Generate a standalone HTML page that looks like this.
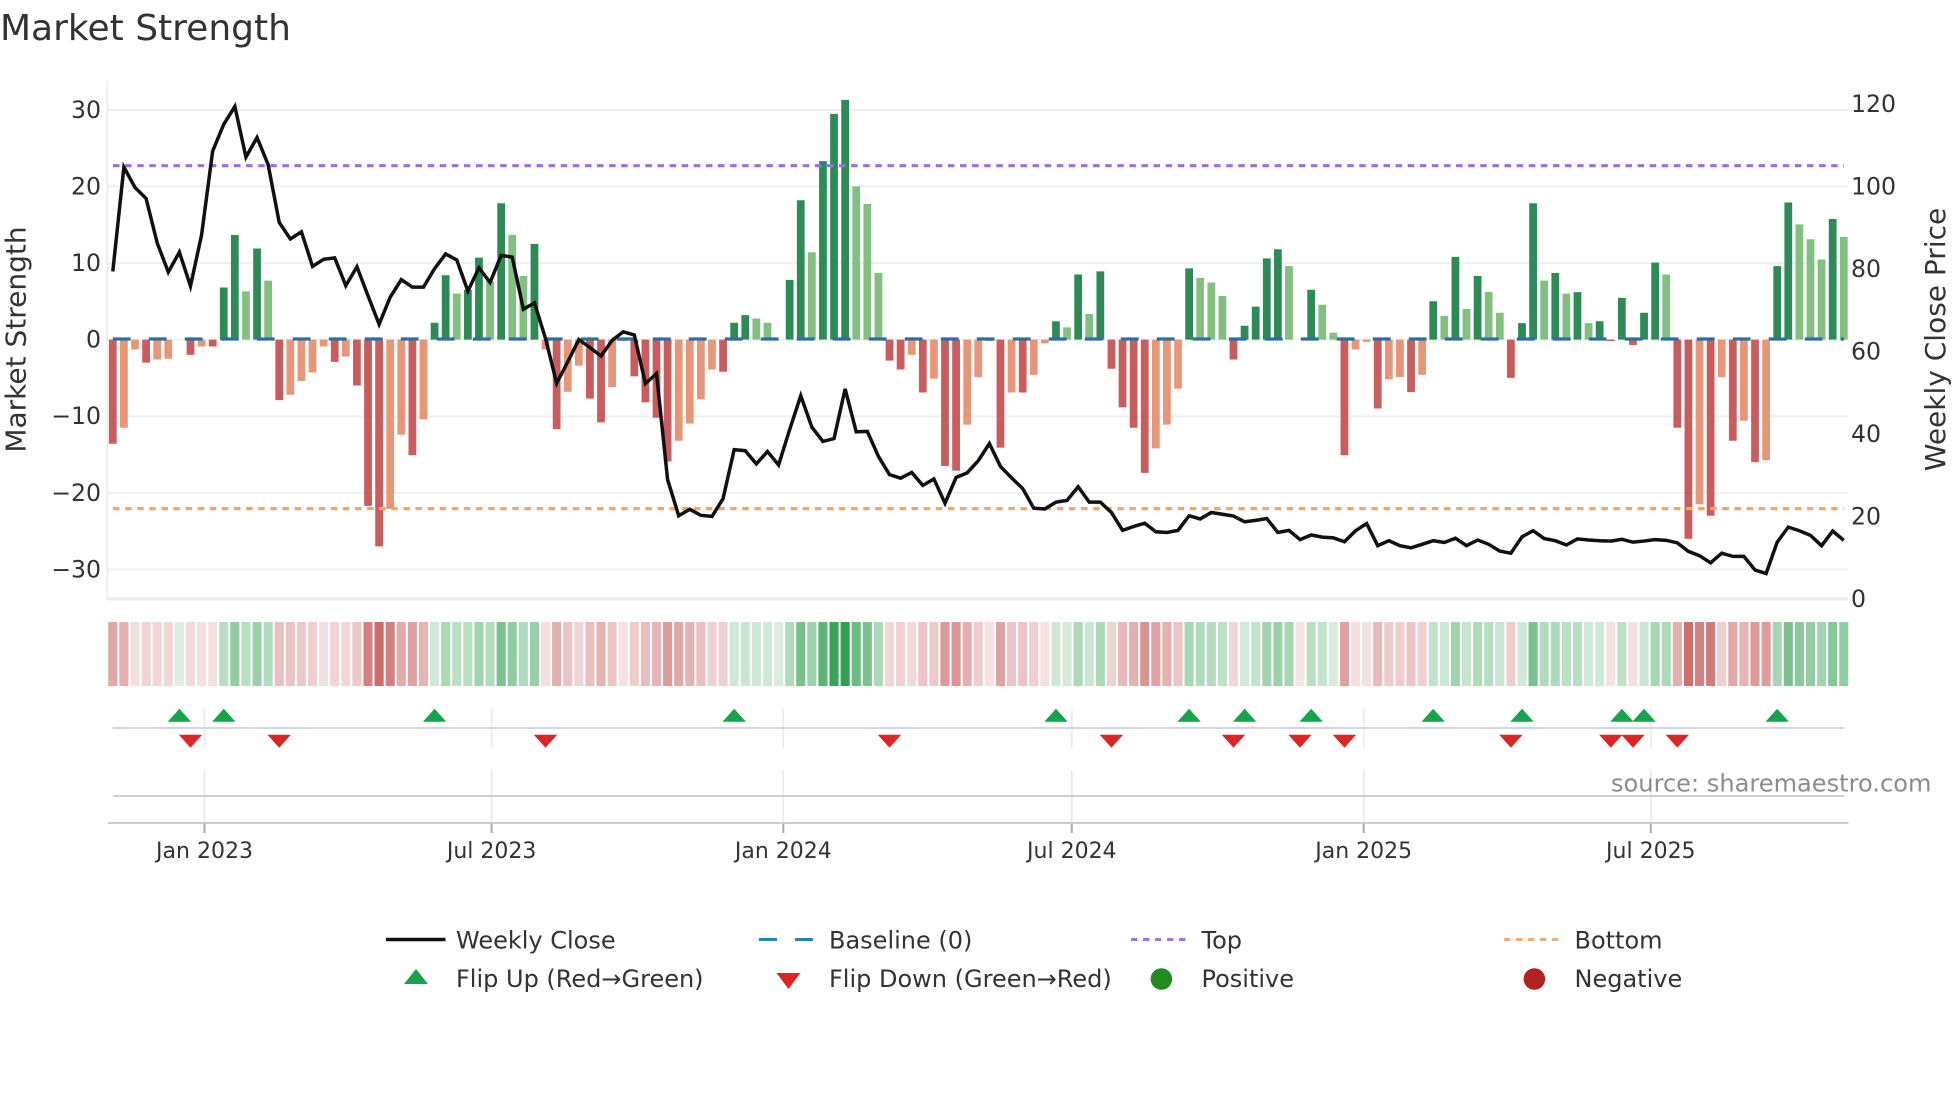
<!DOCTYPE html>
<html><head><meta charset="utf-8"><title>Market Strength</title>
<style>
html,body{margin:0;padding:0;background:#fff;width:1960px;height:1102px;overflow:hidden}
svg{display:block}
text{font-family:"DejaVu Sans","Liberation Sans",sans-serif;fill:#333}
.t{font-size:23.6px}
.x{font-size:22px}
.l{font-size:24px}
</style></head><body>
<svg width="1960" height="1102" viewBox="0 0 1960 1102" xmlns="http://www.w3.org/2000/svg">
<text x="0" y="40" style="font-size:36px">Market Strength</text>
<!-- grid -->
<path stroke="#eef0f2" stroke-width="2" fill="none" d="M108 110H1848M108 186.4H1848M108 263H1848M108 339.6H1848M108 416.2H1848M108 492.8H1848M108 569.5H1848"/>
<path stroke="#eceef2" stroke-width="2" d="M107.3 81V600"/>
<path stroke="#e9ebf2" stroke-width="3" d="M107 599H1848"/>
<!-- bars -->
<g transform="translate(112.8,339.6) scale(11.096,-7.66)" fill="none" stroke-width=".7">
<path stroke="#c95c5c" d="M0 0V-13.6M3 0V-3M7 0V-2M9 0V-.9M15 0V-7.9M20 0V-2.9M22 0V-6M23 0V-21.7M24 0V-27M27 0V-15.1M40 0V-11.7M43 0V-7.7M44 0V-10.8M47 0V-4.8M48 0V-8.2M49 0V-10.2M50 0V-15.9M55 0V-4.2M70 0V-2.75M71 0V-3.9M73 0V-6.9M75 0V-16.5M76 0V-17.1M80 0V-14.1M82 0V-6.9M90 0V-3.8M91 0V-8.85M92 0V-11.5M93 0V-17.4M101 0V-2.6M111 0V-15.1M114 0V-9M117 0V-6.85M126 0V-5M135 0V-.2M137 0V-.7M141 0V-11.5M142 0V-26M144 0V-23M146 0V-13.2M148 0V-16"/>
<path stroke="#e8967a" d="M1 0V-11.5M2 0V-1.3M4 0V-2.6M5 0V-2.5M8 0V-.9M16 0V-7.2M17 0V-5.4M18 0V-4.3M19 0V-.9M21 0V-2.2M25 0V-22.1M26 0V-12.4M28 0V-10.4M39 0V-1.3M41 0V-6.8M42 0V-3.4M45 0V-6.2M46 0V-.2M51 0V-13.2M52 0V-10.95M53 0V-7.8M54 0V-3.9M72 0V-2M74 0V-5.1M77 0V-11.1M78 0V-4.9M79 0V-.2M81 0V-6.9M83 0V-4.6M84 0V-.5M94 0V-14.2M95 0V-11.1M96 0V-6.4M112 0V-1.3M113 0V-.3M115 0V-5.2M116 0V-4.9M118 0V-4.6M143 0V-21.5M145 0V-4.9M147 0V-10.6M149 0V-15.75"/>
<path stroke="#2e8b57" d="M10 0V6.8M11 0V13.65M13 0V11.9M29 0V2.2M30 0V8.4M32 0V6.5M33 0V10.7M35 0V17.8M38 0V12.5M56 0V2.2M57 0V3.2M61 0V7.8M62 0V18.2M64 0V23.3M65 0V29.45M66 0V31.3M85 0V2.4M87 0V8.5M89 0V8.9M97 0V9.3M102 0V1.8M103 0V4.3M104 0V10.6M105 0V11.8M108 0V6.5M119 0V5M121 0V10.8M123 0V8.3M127 0V2.15M128 0V17.8M130 0V8.7M132 0V6.2M134 0V2.4M136 0V5.45M138 0V3.5M139 0V10.05M150 0V9.6M151 0V17.9M155 0V15.75"/>
<path stroke="#82bf80" d="M12 0V6.3M14 0V7.7M31 0V6M34 0V7.6M36 0V13.65M37 0V8.3M58 0V2.75M59 0V2.2M63 0V11.4M67 0V20M68 0V17.7M69 0V8.7M86 0V1.6M88 0V3.35M98 0V8.05M99 0V7.45M100 0V5.7M106 0V9.6M109 0V4.55M110 0V.9M120 0V3.1M122 0V4M124 0V6.2M125 0V3.5M129 0V7.7M131 0V6M133 0V2.15M140 0V8.5M152 0V15.05M153 0V13.1M154 0V10.45M156 0V13.4"/>
</g>
<!-- reference lines -->
<path stroke="#2b70a3" stroke-width="3.2" stroke-dasharray="17.8 18.2" d="M112.8 339H1844" fill="none"/>
<path stroke="#a06ce0" stroke-width="3.2" stroke-dasharray="6.5 5.6" d="M113 165.7H1844" fill="none"/>
<path stroke="#f0a868" stroke-width="3.2" stroke-dasharray="6.5 5.6" d="M113 508.6H1844" fill="none"/>
<!-- close line -->
<polyline transform="translate(112.8,60) scale(11.096,.35714)" fill="none" stroke="#111" stroke-width="3.5" stroke-linejoin="miter" vector-effect="non-scaling-stroke" style="vector-effect:non-scaling-stroke" points="0,592 1,300 2,357 3,388 4,512 5,594 6,538 7,633 8,490 9,255 10,180 11,130 12,272 13,217 14,293 15,455 16,501 17,481 18,578 19,558 20,554 21,632 22,579 23,660 24,740 25,664 26,615 27,636 28,636 29,584 30,543 31,560 32,647 33,582 34,623 35,547 36,552 37,698 38,680 39,780 40,905 41,845 42,783 43,805 44,829 45,785 46,761 47,770 48,906 49,878 50,1175 51,1276 52,1258 53,1275 54,1278 55,1228 56,1091 57,1094 58,1131 59,1096 60,1134 61,1035 62,940 63,1028 64,1068 65,1060 66,921 67,1041 68,1040 69,1110 70,1161 71,1171 72,1155 73,1191 74,1173 75,1241 76,1169 77,1156 78,1122 79,1074 80,1138 81,1170 82,1200 83,1255 84,1257 85,1238 86,1233 87,1195 88,1238 89,1238 90,1267 91,1317 92,1306 93,1297 94,1321 95,1323 96,1317 97,1276 98,1285 99,1267 100,1272 101,1277 102,1293 103,1289 104,1284 105,1323 106,1317 107,1343 108,1330 109,1336 110,1338 111,1349 112,1318 113,1298 114,1360 115,1346 116,1360 117,1366 118,1356 119,1346 120,1351 121,1339 122,1360 123,1344 124,1356 125,1375 126,1381 127,1335 128,1318 129,1340 130,1346 131,1358 132,1341 133,1344 134,1346 135,1347 136,1342 137,1350 138,1347 139,1343 140,1345 141,1352 142,1376 143,1388 144,1408 145,1381 146,1390 147,1390 148,1428 149,1438 150,1350 151,1308 152,1318 153,1331 154,1360 155,1319 156,1345"/>
<!-- axis tick labels -->
<g class="t" text-anchor="end">
<text x="101" y="118">30</text><text x="101" y="194.5">20</text><text x="101" y="271">10</text><text x="101" y="347.6">0</text><text x="101" y="424.2">−10</text><text x="101" y="500.8">−20</text><text x="101" y="577.5">−30</text>
</g>
<g class="t">
<text x="1851" y="112.2">120</text><text x="1851" y="194.7">100</text><text x="1851" y="277.2">80</text><text x="1851" y="359.6">60</text><text x="1851" y="442">40</text><text x="1851" y="524.5">20</text><text x="1851" y="606.8">0</text>
</g>
<text transform="translate(25.5,339.5) rotate(-90)" text-anchor="middle" style="font-size:28px">Market Strength</text>
<text transform="translate(1945,339.5) rotate(-90)" text-anchor="middle" style="font-size:28px">Weekly Close Price</text>
<!-- heat strip -->
<g transform="translate(112.8,622) scale(11.096,64)" fill="none" stroke-width=".82" stroke="rgb(199,88,88)">
<path d="M0 0V1" opacity=".53"/><path d="M1 0V1" opacity=".48"/><path d="M2 0V1" opacity=".2"/><path d="M3 0V1" opacity=".25"/><path d="M4 0V1" opacity=".24"/><path d="M5 0V1" opacity=".24"/><path d="M7 0V1" opacity=".22"/><path d="M8 0V1" opacity=".19"/><path d="M9 0V1" opacity=".19"/><path d="M15 0V1" opacity=".38"/><path d="M16 0V1" opacity=".36"/><path d="M17 0V1" opacity=".31"/><path d="M18 0V1" opacity=".29"/><path d="M19 0V1" opacity=".19"/><path d="M20 0V1" opacity=".25"/><path d="M21 0V1" opacity=".23"/><path d="M22 0V1" opacity=".33"/><path d="M23 0V1" opacity=".75"/><path d="M24 0V1" opacity=".89"/><path d="M25 0V1" opacity=".76"/><path d="M26 0V1" opacity=".5"/><path d="M27 0V1" opacity=".57"/><path d="M28 0V1" opacity=".45"/><path d="M39 0V1" opacity=".2"/><path d="M40 0V1" opacity=".48"/><path d="M41 0V1" opacity=".35"/><path d="M42 0V1" opacity=".26"/><path d="M43 0V1" opacity=".38"/><path d="M44 0V1" opacity=".46"/><path d="M45 0V1" opacity=".34"/><path d="M46 0V1" opacity=".18"/><path d="M47 0V1" opacity=".3"/><path d="M48 0V1" opacity=".39"/><path d="M49 0V1" opacity=".44"/><path d="M50 0V1" opacity=".6"/><path d="M51 0V1" opacity=".52"/><path d="M52 0V1" opacity=".46"/><path d="M53 0V1" opacity=".38"/><path d="M54 0V1" opacity=".27"/><path d="M55 0V1" opacity=".28"/><path d="M70 0V1" opacity=".24"/><path d="M71 0V1" opacity=".27"/><path d="M72 0V1" opacity=".22"/><path d="M73 0V1" opacity=".35"/><path d="M74 0V1" opacity=".31"/><path d="M75 0V1" opacity=".61"/><path d="M76 0V1" opacity=".63"/><path d="M77 0V1" opacity=".47"/><path d="M78 0V1" opacity=".3"/><path d="M79 0V1" opacity=".18"/><path d="M80 0V1" opacity=".55"/><path d="M81 0V1" opacity=".35"/><path d="M82 0V1" opacity=".35"/><path d="M83 0V1" opacity=".29"/><path d="M84 0V1" opacity=".18"/><path d="M90 0V1" opacity=".27"/><path d="M91 0V1" opacity=".41"/><path d="M92 0V1" opacity=".48"/><path d="M93 0V1" opacity=".64"/><path d="M94 0V1" opacity=".55"/><path d="M95 0V1" opacity=".47"/><path d="M96 0V1" opacity=".34"/><path d="M101 0V1" opacity=".24"/><path d="M107 0V1" opacity=".17"/><path d="M111 0V1" opacity=".57"/><path d="M112 0V1" opacity=".2"/><path d="M113 0V1" opacity=".18"/><path d="M114 0V1" opacity=".41"/><path d="M115 0V1" opacity=".31"/><path d="M116 0V1" opacity=".3"/><path d="M117 0V1" opacity=".35"/><path d="M118 0V1" opacity=".29"/><path d="M126 0V1" opacity=".3"/><path d="M135 0V1" opacity=".18"/><path d="M137 0V1" opacity=".19"/><path d="M141 0V1" opacity=".48"/><path d="M142 0V1" opacity=".87"/><path d="M143 0V1" opacity=".75"/><path d="M144 0V1" opacity=".79"/><path d="M145 0V1" opacity=".3"/><path d="M146 0V1" opacity=".52"/><path d="M147 0V1" opacity=".45"/><path d="M148 0V1" opacity=".6"/><path d="M149 0V1" opacity=".59"/>
</g>
<g transform="translate(112.8,622) scale(11.096,64)" fill="none" stroke-width=".82" stroke="rgb(50,160,80)">
<path d="M6 0V1" opacity=".17"/><path d="M10 0V1" opacity=".35"/><path d="M11 0V1" opacity=".54"/><path d="M12 0V1" opacity=".34"/><path d="M13 0V1" opacity=".49"/><path d="M14 0V1" opacity=".38"/><path d="M29 0V1" opacity=".23"/><path d="M30 0V1" opacity=".4"/><path d="M31 0V1" opacity=".33"/><path d="M32 0V1" opacity=".34"/><path d="M33 0V1" opacity=".46"/><path d="M34 0V1" opacity=".37"/><path d="M35 0V1" opacity=".65"/><path d="M36 0V1" opacity=".54"/><path d="M37 0V1" opacity=".39"/><path d="M38 0V1" opacity=".5"/><path d="M56 0V1" opacity=".23"/><path d="M57 0V1" opacity=".26"/><path d="M58 0V1" opacity=".24"/><path d="M59 0V1" opacity=".23"/><path d="M60 0V1" opacity=".18"/><path d="M61 0V1" opacity=".38"/><path d="M62 0V1" opacity=".66"/><path d="M63 0V1" opacity=".48"/><path d="M64 0V1" opacity=".79"/><path d="M65 0V1" opacity=".96"/><path d="M66 0V1" opacity="1"/><path d="M67 0V1" opacity=".71"/><path d="M68 0V1" opacity=".64"/><path d="M69 0V1" opacity=".4"/><path d="M85 0V1" opacity=".23"/><path d="M86 0V1" opacity=".21"/><path d="M87 0V1" opacity=".4"/><path d="M88 0V1" opacity=".26"/><path d="M89 0V1" opacity=".41"/><path d="M97 0V1" opacity=".42"/><path d="M98 0V1" opacity=".39"/><path d="M99 0V1" opacity=".37"/><path d="M100 0V1" opacity=".32"/><path d="M102 0V1" opacity=".22"/><path d="M103 0V1" opacity=".29"/><path d="M104 0V1" opacity=".45"/><path d="M105 0V1" opacity=".49"/><path d="M106 0V1" opacity=".43"/><path d="M108 0V1" opacity=".34"/><path d="M109 0V1" opacity=".29"/><path d="M110 0V1" opacity=".19"/><path d="M119 0V1" opacity=".3"/><path d="M120 0V1" opacity=".25"/><path d="M121 0V1" opacity=".46"/><path d="M122 0V1" opacity=".28"/><path d="M123 0V1" opacity=".39"/><path d="M124 0V1" opacity=".34"/><path d="M125 0V1" opacity=".26"/><path d="M127 0V1" opacity=".23"/><path d="M128 0V1" opacity=".65"/><path d="M129 0V1" opacity=".38"/><path d="M130 0V1" opacity=".4"/><path d="M131 0V1" opacity=".33"/><path d="M132 0V1" opacity=".34"/><path d="M133 0V1" opacity=".23"/><path d="M134 0V1" opacity=".23"/><path d="M136 0V1" opacity=".32"/><path d="M138 0V1" opacity=".26"/><path d="M139 0V1" opacity=".44"/><path d="M140 0V1" opacity=".4"/><path d="M150 0V1" opacity=".43"/><path d="M151 0V1" opacity=".65"/><path d="M152 0V1" opacity=".57"/><path d="M153 0V1" opacity=".52"/><path d="M154 0V1" opacity=".45"/><path d="M155 0V1" opacity=".59"/><path d="M156 0V1" opacity=".53"/>
</g>
<!-- vertical grid -->
<path stroke="#e6e9ef" stroke-width="1.6" fill="none" d="M204.5 708.7V747.7M204.5 770V823M491.6 708.7V747.7M491.6 770V823M783.3 708.7V747.7M783.3 770V823M1071.8 708.7V747.7M1071.8 770V823M1363.7 708.7V747.7M1363.7 770V823M1650.8 708.7V747.7M1650.8 770V823"/>
<!-- flip lines -->
<path stroke="#d3d6dc" stroke-width="2" d="M112.8 728H1844"/>
<path stroke="#d0d0d0" stroke-width="2" d="M112.8 796H1844"/>
<path stroke="#cccccc" stroke-width="2" d="M108 823H1848.5"/>
<path stroke="#aaa" stroke-width="2" d="M204.5 824V833M491.6 824V833M783.3 824V833M1071.8 824V833M1363.7 824V833M1650.8 824V833"/>
<!-- flip markers -->
<path fill="#16a34a" d="M179.4 721.7h-11.7l11.7-13 11.7 13zM223.8 721.7h-11.7l11.7-13 11.7 13zM434.6 721.7h-11.7l11.7-13 11.7 13zM734.2 721.7h-11.7l11.7-13 11.7 13zM1056 721.7h-11.7l11.7-13 11.7 13zM1189.1 721.7h-11.7l11.7-13 11.7 13zM1244.6 721.7h-11.7l11.7-13 11.7 13zM1311.2 721.7h-11.7l11.7-13 11.7 13zM1433.2 721.7h-11.7l11.7-13 11.7 13zM1522 721.7h-11.7l11.7-13 11.7 13zM1621.9 721.7h-11.7l11.7-13 11.7 13zM1644 721.7h-11.7l11.7-13 11.7 13zM1777.2 721.7h-11.7l11.7-13 11.7 13z"/>
<path fill="#dc2626" d="M190.5 734.7h-11.7l11.7 13 11.7-13zM279.2 734.7h-11.7l11.7 13 11.7-13zM545.5 734.7h-11.7l11.7 13 11.7-13zM889.5 734.7h-11.7l11.7 13 11.7-13zM1111.4 734.7h-11.7l11.7 13 11.7-13zM1233.5 734.7h-11.7l11.7 13 11.7-13zM1300 734.7h-11.7l11.7 13 11.7-13zM1344.5 734.7h-11.7l11.7 13 11.7-13zM1510.9 734.7h-11.7l11.7 13 11.7-13zM1610.8 734.7h-11.7l11.7 13 11.7-13zM1633 734.7h-11.7l11.7 13 11.7-13zM1677.3 734.7h-11.7l11.7 13 11.7-13z"/>
<g class="x" text-anchor="middle">
<text x="204.5" y="858">Jan 2023</text><text x="491.6" y="858">Jul 2023</text><text x="783.3" y="858">Jan 2024</text><text x="1071.8" y="858">Jul 2024</text><text x="1363.7" y="858">Jan 2025</text><text x="1650.8" y="858">Jul 2025</text>
</g>
<text x="1611" y="791.5" style="font-size:24.1px;fill:#8c8c8c">source: sharemaestro.com</text>
<!-- legend -->
<path stroke="#111" stroke-width="3.4" d="M386 939.5H445.5"/>
<path stroke="#2b7fb8" stroke-width="3" d="M759 939.5H777M795 939.5H813"/>
<path stroke="#a873e0" stroke-width="3" stroke-dasharray="6.3 5.7" d="M1131 939.5H1187" fill="none"/>
<path stroke="#f0aa78" stroke-width="3" stroke-dasharray="6.3 5.7" d="M1504 939.5H1559" fill="none"/>
<path fill="#16a34a" d="M416 984h-12l12-15 12 15z"/>
<path fill="#dc2626" d="M788.5 973h-12l12 16 12-16z"/>
<circle cx="1161.4" cy="979" r="10.8" fill="#228b22"/>
<circle cx="1534.4" cy="979" r="10.8" fill="#b22222"/>
<g class="l">
<text x="456" y="948.5">Weekly Close</text>
<text x="829" y="948.5">Baseline (0)</text>
<text x="1201.5" y="948.5">Top</text>
<text x="1574.5" y="948.5">Bottom</text>
<text x="456" y="987">Flip Up (Red→Green)</text>
<text x="829" y="987">Flip Down (Green→Red)</text>
<text x="1201.5" y="987">Positive</text>
<text x="1574.5" y="987">Negative</text>
</g>
</svg>
</body></html>
